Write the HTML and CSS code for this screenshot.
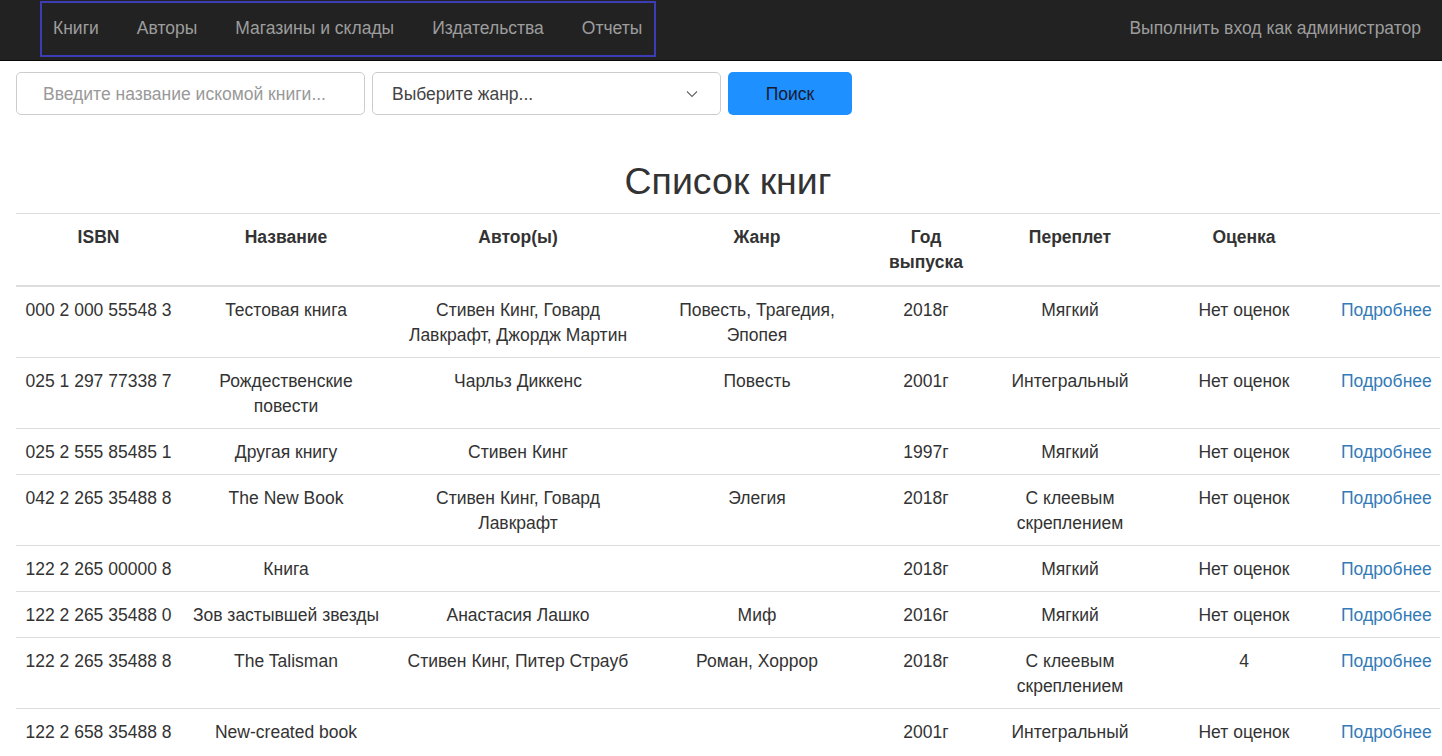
FILE: index.html
```html
<!DOCTYPE html>
<html lang="ru">
<head>
<meta charset="utf-8">
<title>Список книг</title>
<link rel="stylesheet" href="styles.css">
</head>
<body>
<header class="navbar">
  <ul class="nav-links">
    <li><a href="#">Книги</a></li>
    <li><a href="#">Авторы</a></li>
    <li><a href="#">Магазины и склады</a></li>
    <li><a href="#">Издательства</a></li>
    <li><a href="#">Отчеты</a></li>
  </ul>
  <a class="nav-login" href="#">Выполнить вход как администратор</a>
</header>
<main class="page">
  <form class="search">
    <input class="field search-input" type="text" placeholder="Введите название искомой книги...">
    <div class="select-wrap">
      <div class="field select-field">Выберите жанр...</div>
      <svg class="chevron" width="12" height="8" viewBox="0 0 12 8"><path d="M1 1.5 L6 6.5 L11 1.5" fill="none" stroke="#666" stroke-width="1.1"/></svg>
    </div>
    <button class="btn-search" type="button">Поиск</button>
  </form>
  <h1 class="title">Список книг</h1>
  <table class="books">
    <colgroup>
      <col class="c1"><col class="c2"><col class="c3"><col class="c4"><col class="c5"><col class="c6"><col class="c7"><col class="c8">
    </colgroup>
    <thead>
      <tr><th>ISBN</th><th>Название</th><th>Автор(ы)</th><th>Жанр</th><th>Год выпуска</th><th>Переплет</th><th>Оценка</th><th></th></tr>
    </thead>
    <tbody>
      <tr><td class="isbn">000 2 000 55548 3</td><td>Тестовая книга</td><td>Стивен Кинг, Говард Лавкрафт, Джордж Мартин</td><td>Повесть, Трагедия, Эпопея</td><td>2018г</td><td>Мягкий</td><td>Нет оценок</td><td><a href="#">Подробнее</a></td></tr>
      <tr><td class="isbn">025 1 297 77338 7</td><td>Рождественские повести</td><td>Чарльз Диккенс</td><td>Повесть</td><td>2001г</td><td>Интегральный</td><td>Нет оценок</td><td><a href="#">Подробнее</a></td></tr>
      <tr><td class="isbn">025 2 555 85485 1</td><td>Другая книгу</td><td>Стивен Кинг</td><td></td><td>1997г</td><td>Мягкий</td><td>Нет оценок</td><td><a href="#">Подробнее</a></td></tr>
      <tr><td class="isbn">042 2 265 35488 8</td><td>The New Book</td><td>Стивен Кинг, Говард Лавкрафт</td><td>Элегия</td><td>2018г</td><td>С клеевым скреплением</td><td>Нет оценок</td><td><a href="#">Подробнее</a></td></tr>
      <tr><td class="isbn">122 2 265 00000 8</td><td>Книга</td><td></td><td></td><td>2018г</td><td>Мягкий</td><td>Нет оценок</td><td><a href="#">Подробнее</a></td></tr>
      <tr><td class="isbn">122 2 265 35488 0</td><td>Зов застывшей звезды</td><td>Анастасия Лашко</td><td>Миф</td><td>2016г</td><td>Мягкий</td><td>Нет оценок</td><td><a href="#">Подробнее</a></td></tr>
      <tr><td class="isbn">122 2 265 35488 8</td><td>The Talisman</td><td>Стивен Кинг, Питер Страуб</td><td>Роман, Хоррор</td><td>2018г</td><td>С клеевым скреплением</td><td>4</td><td><a href="#">Подробнее</a></td></tr>
      <tr><td class="isbn">122 2 658 35488 8</td><td>New-created book</td><td></td><td></td><td>2001г</td><td>Интегральный</td><td>Нет оценок</td><td><a href="#">Подробнее</a></td></tr>
    </tbody>
  </table>
</main>
</body>
</html>
```
FILE: styles.css
```css
* { box-sizing: border-box; }
html, body { margin: 0; padding: 0; }
body {
  font-family: "Liberation Sans", Arial, sans-serif;
  font-size: 17.5px;
  line-height: 25px;
  color: #333;
  background: #fff;
  overflow: hidden;
}
a { text-decoration: none; }

.navbar {
  height: 61px;
  background: #222;
  border-bottom: 1px solid #080808;
  display: flex;
  align-items: center;
  justify-content: space-between;
  padding: 0 21px 0 40px;
}
.nav-links {
  list-style: none;
  margin: 0;
  padding: 0 12px 0 11px;
  height: 56px;
  border: 2px solid #3c3cb4;
  display: flex;
  align-items: center;
  gap: 38px;
  margin-bottom: 3px;
}
.nav-links a, .nav-login {
  color: #9d9d9d;
  font-size: 17.5px;
}
.nav-login { margin-bottom: 3px; }

.page { padding: 0 2px 0 16px; }

.search {
  display: flex;
  gap: 7px;
  margin-top: 11px;
}
.field {
  height: 43px;
  width: 349px;
  border: 1px solid #ccc;
  border-radius: 5px;
  font-family: inherit;
  font-size: 17.5px;
  color: #555;
  background: #fff;
}
.search-input { padding: 2px 12px 0 26px; }
.search-input::placeholder { color: #999; }
.select-wrap { position: relative; }
.select-field {
  display: flex;
  align-items: center;
  padding: 2px 19px 0;
  color: #444;
}
.chevron { position: absolute; right: 23px; top: 18px; }
.btn-search {
  width: 124px;
  height: 43px;
  border: none;
  border-radius: 5px;
  background: #1e90ff;
  color: #1a1a2e;
  font-family: inherit;
  font-size: 17.5px;
  padding-top: 2px;
}

.title {
  margin: 46px 0 11px;
  text-align: center;
  font-size: 37.5px;
  font-weight: 500;
  line-height: 41px;
  color: #333;
}

.books {
  width: 1424px;
  table-layout: fixed;
  border-collapse: collapse;
  border-spacing: 0;
}
.c1 { width: 165px; }
.c2 { width: 210px; }
.c3 { width: 254px; }
.c4 { width: 224px; }
.c5 { width: 114px; }
.c6 { width: 174px; }
.c7 { width: 174px; }
.c8 { width: 109px; }
.books th, .books td {
  padding: 11px 10px 9px;
  text-align: center;
  vertical-align: top;
  border-top: 1px solid #ddd;
  line-height: 25px;
}
.books th {
  font-weight: bold;
  padding-bottom: 10px;
  border-bottom: 2px solid #ddd;
}
.books td.isbn { white-space: nowrap; padding-left: 4px; padding-right: 4px; }
.books td:last-child { padding-right: 12px; }
.books td a { color: #337ab7; }
```
